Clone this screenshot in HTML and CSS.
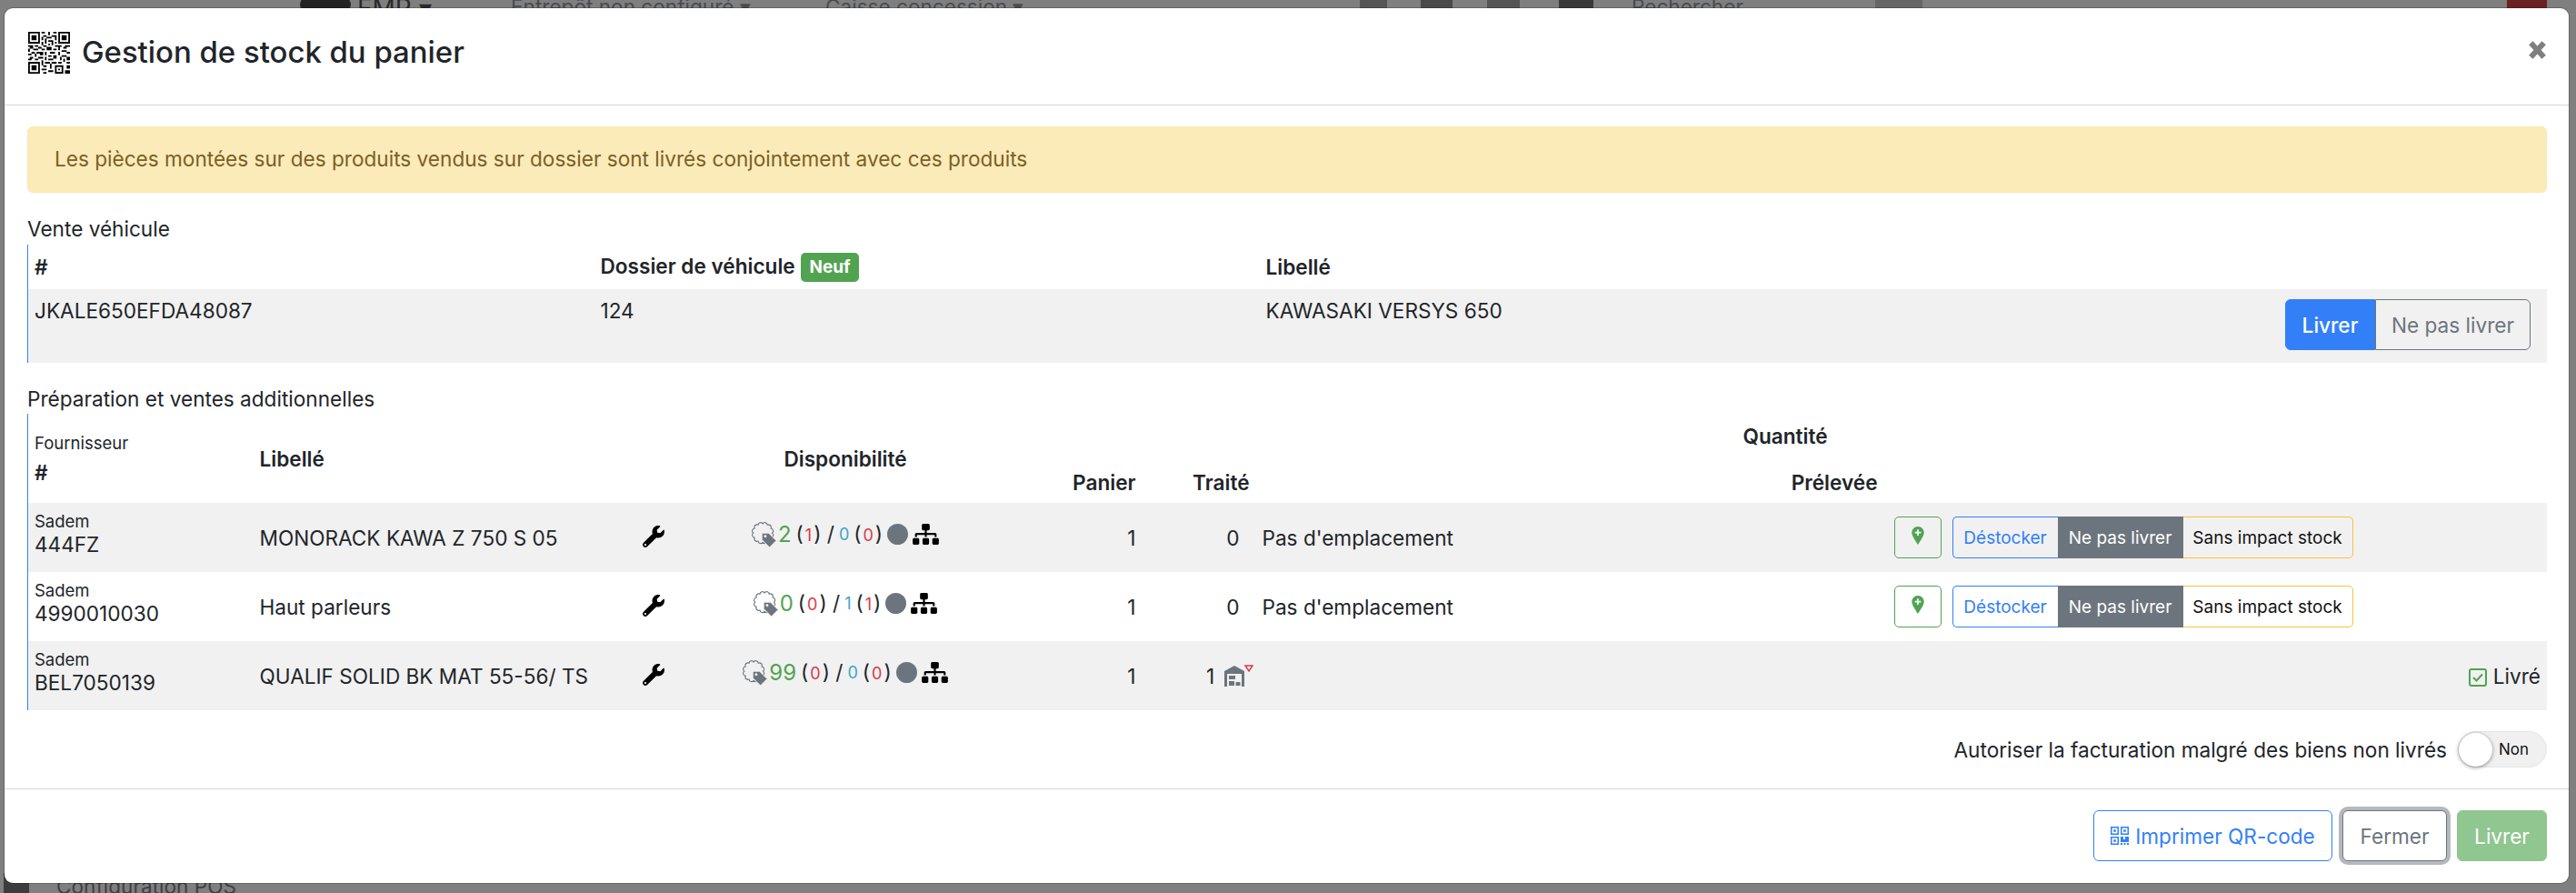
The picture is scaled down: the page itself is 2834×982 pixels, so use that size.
FILE: index.html
```html
<!DOCTYPE html>
<html lang="fr">
<head>
    <meta charset="UTF-8">
    <title>Gestion de stock du panier</title>
    <link rel="stylesheet" href="styles.css">
</head>
<body>
    <svg class="defs" width="0" height="0">
        <symbol id="i-qr" viewBox="0 0 25 25">
            <path fill-rule="evenodd" d="M0 0h7v7H0zM1 1v5h5V1zM2 2h3v3H2zM18 0h7v7h-7zM19 1v5h5V1zM20 2h3v3h-3zM0 18h7v7H0zM1 19v5h5v-5zM2 20h3v3H2z"/>
            <path d="M8 0h2v1H8zM12 0h1v2h-1zM15 0h2v1h-2zM9 2h2v1H9zM14 2h3v1h-3zM8 3h1v2H8zM11 3h3v1h-3zM16 3h1v2h-1zM10 4h1v3h-1zM12 5h3v1h-3zM8 6h1v2H8zM14 6h1v2h-1zM16 6h1v1h-1zM12 7h1v1h-1zM0 8h3v1H0zM4 8h2v1H4zM9 8h2v1H9zM16 8h4v1h-4zM22 8h3v1h-3zM1 9h2v1H1zM6 9h2v1H6zM11 9h3v2h-3zM18 9h1v2h-1zM21 9h2v1h-2zM0 10h1v2H0zM3 10h3v1H3zM8 10h2v1H8zM15 10h2v1h-2zM20 11h3v1h-3zM2 12h2v1H2zM5 12h4v1H5zM10 12h1v2h-1zM13 12h3v1h-3zM18 12h1v2h-1zM23 12h2v1h-2zM0 13h2v1H0zM4 13h1v2H4zM7 13h2v1H7zM12 14h2v1h-2zM15 14h2v2h-2zM20 14h3v1h-3zM1 15h2v1H1zM6 15h3v1H6zM10 15h1v2h-1zM19 15h1v2h-1zM23 15h2v2h-2zM0 16h2v1H0zM4 16h2v1H4zM12 16h3v1h-3zM21 16h1v2h-1zM8 17h1v3H8zM14 18h3v1h-3zM18 18h2v1h-2zM23 18h2v1h-2zM10 18h3v1h-3zM9 20h2v1H9zM13 19h1v3h-1zM16 20h5v5h-5zM23 20h2v2h-2zM8 22h3v1H8zM12 23h3v1h-3zM22 23h3v2h-3zM9 24h2v1H9z"/>
            <path fill="#fff" d="M17 21h3v3h-3z"/>
            <path d="M18 22h1v1h-1z"/>
        </symbol>
        <symbol id="i-qr-small" viewBox="0 0 20 20">
            <path fill-rule="evenodd" d="M0 0h9v9H0zM1.500 1.500v6h6v-6zM3.200 3.200h2.600v2.600H3.200zM11 0h9v9h-9zM12.500 1.500v6h6v-6zM14.200 3.200h2.600v2.600h-2.600zM0 11h9v9H0zM1.500 12.500v6h6v-6zM3.200 14.200h2.600v2.600H3.200z"/>
            <path d="M11 11h3v3h2v-3h4v6h-9zM11 18h2v2h-2zM14.500 18h2v2h-2zM18 18h2v2h-2z"/>
        </symbol>
        <symbol id="i-wrench" viewBox="0 0 512 512">
            <path d="M507.73 109.1c-2.24-9.03-13.54-12.09-20.12-5.51l-74.36 74.36-67.88-11.31-11.31-67.88 74.36-74.36c6.62-6.62 3.43-17.9-5.66-20.16-47.38-11.74-99.55.91-136.58 37.93-39.64 39.64-50.55 97.1-34.05 147.2L18.74 402.76c-24.99 24.99-24.99 65.51 0 90.5 24.99 24.99 65.51 24.99 90.5 0l213.21-213.21c50.12 16.71 107.47 5.68 147.37-34.22 37.07-37.07 49.7-89.32 37.91-136.73zM64 472c-13.25 0-24-10.75-24-24 0-13.26 10.75-24 24-24s24 10.74 24 24c0 13.25-10.75 24-24 24z"/>
        </symbol>
        <symbol id="i-sitemap" viewBox="0 0 640 512">
            <path d="M128 352H32c-17.67 0-32 14.33-32 32v96c0 17.67 14.33 32 32 32h96c17.67 0 32-14.33 32-32v-96c0-17.67-14.33-32-32-32zm-24-80h192v48h48v-48h192v48h48v-57.59c0-21.17-17.23-38.41-38.41-38.41H344v-64h40c17.67 0 32-14.33 32-32V32c0-17.67-14.33-32-32-32H256c-17.67 0-32 14.33-32 32v96c0 17.67 14.33 32 32 32h40v64H94.41C73.23 224 56 241.23 56 262.41V320h48v-48zm264 80h-96c-17.67 0-32 14.33-32 32v96c0 17.67 14.33 32 32 32h96c17.67 0 32-14.33 32-32v-96c0-17.67-14.33-32-32-32zm240 0h-96c-17.67 0-32 14.33-32 32v96c0 17.67 14.33 32 32 32h96c17.67 0 32-14.33 32-32v-96c0-17.67-14.33-32-32-32z"/>
        </symbol>
        <symbol id="i-tag" viewBox="0 0 30 30">
            <path fill="none" stroke="#6c757d" stroke-width="1.200" d="M24 13A3 3 0 0 1 22.530 18.500A3 3 0 0 1 18.500 22.530A3 3 0 0 1 13 24A3 3 0 0 1 7.500 22.530A3 3 0 0 1 3.470 18.500A3 3 0 0 1 2 13A3 3 0 0 1 3.470 7.500A3 3 0 0 1 7.500 3.470A3 3 0 0 1 13 2A3 3 0 0 1 18.500 3.470A3 3 0 0 1 22.530 7.500A3 3 0 0 1 24 13Z"/>
            <path fill="#6c757d" stroke="#f7f7f7" d="M12 13h8l9 9-8 8-9-9z"/>
            <circle cx="16" cy="17" r="1.600" fill="#f1f1f1"/>
        </symbol>
        <symbol id="i-marker" viewBox="0 0 16 24">
            <path fill="#51a351" d="M8 0C3.600 0 0 3.500 0 8c0 4.500 5 11 8 16 3-5 8-11.500 8-16 0-4.500-3.600-8-8-8z"/>
            <path fill="#fff" d="M7 4h2v3h3v2H9v3H7V9H4V7h3z"/>
        </symbol>
        <symbol id="i-check" viewBox="0 0 20 20">
            <rect x="1" y="1" width="18" height="18" rx="2" fill="none" stroke="#51a351" stroke-width="2"/>
            <path fill="none" stroke="#51a351" stroke-width="2" d="M5 10l3.500 3.500L15 6.500"/>
        </symbol>
        <symbol id="i-warehouse" viewBox="0 0 32 24">
            <path fill="#6c757d" d="M0 7L11 1l11 6v17h-3V10H3v14H0z"/>
            <path fill="#6c757d" d="M5 12h7v4H5zM5 18h6v5H5zM12.500 19h5v4h-5z"/>
            <path fill="none" stroke="#d9394b" stroke-width="1.500" d="M23 1h8l-4 6z"/>
        </symbol>
    </svg>

    <!-- page behind the modal, only the edges show -->
    <div class="backdrop">
        <span class="bd-logo"></span>
        <span class="bd-text bd-fmp">FMP ▾</span>
        <span class="bd-text bd-store">Entrepôt non configuré ▾</span>
        <span class="bd-text bd-till">Caisse concession ▾</span>
        <span class="bd-block bd-b1"></span>
        <span class="bd-block bd-b2"></span>
        <span class="bd-block bd-b3"></span>
        <span class="bd-block bd-b4"></span>
        <span class="bd-text bd-search">Rechercher</span>
        <span class="bd-block bd-b5"></span>
        <span class="bd-red"></span>
        <span class="bd-text bd-config">Configuration POS</span>
        <span class="bd-square"></span>
    </div>

    <div class="modal">
        <header class="modal-header">
            <svg class="title-qr"><use href="#i-qr"/></svg>
            <h1>Gestion de stock du panier</h1>
            <svg class="close-x" viewBox="0 0 17 20"><path d="M2 3l13 14M15 3L2 17"/></svg>
        </header>

        <div class="modal-body">
            <div class="alert">Les pièces montées sur des produits vendus sur dossier sont livrés conjointement avec ces produits</div>

            <div class="label">Vente véhicule</div>
            <table class="grid vehicle">
                <colgroup><col class="v1"><col class="v2"><col></colgroup>
                <tr>
                    <th>#</th>
                    <th>Dossier de véhicule <span class="badge">Neuf</span></th>
                    <th>Libellé</th>
                </tr>
                <tr class="odd">
                    <td>JKALE650EFDA48087</td>
                    <td>124</td>
                    <td>
                        <div class="vehicle-line">
                            <span>KAWASAKI VERSYS 650</span>
                            <div class="switch">
                                <button class="sw-on">Livrer</button>
                                <button class="sw-off">Ne pas livrer</button>
                            </div>
                        </div>
                    </td>
                </tr>
            </table>

            <div class="label second">Préparation et ventes additionnelles</div>
            <table class="grid parts">
                <colgroup>
                    <col class="c1"><col class="c2"><col class="c3"><col class="c4">
                    <col class="c5"><col class="c6"><col class="c7"><col>
                </colgroup>
                <tr class="head-top">
                    <th rowspan="2"><span class="small">Fournisseur</span><br>#</th>
                    <th rowspan="2">Libellé</th>
                    <th rowspan="2"></th>
                    <th rowspan="2" class="center">Disponibilité</th>
                    <th colspan="3" class="qty-head">Quantité</th>
                    <th rowspan="2"></th>
                </tr>
                <tr class="head-bottom">
                    <th class="right">Panier</th>
                    <th class="right">Traité</th>
                    <th class="right">Prélevée</th>
                </tr>

                <tr class="odd row">
                    <td class="supplier"><span class="small">Sadem</span><br>444FZ</td>
                    <td>MONORACK KAWA Z 750 S 05</td>
                    <td><svg class="ic-wrench"><use href="#i-wrench"/></svg></td>
                    <td class="center">
                        <div class="stock">
                            <svg class="ic-tag"><use href="#i-tag"/></svg>
                            <span class="ok">2</span>
                            <span class="paren">(<i class="bad">1</i>) /</span>
                            <i class="info">0</i>
                            <span class="paren">(<i class="bad">0</i>)</span>
                            <span class="dot"></span>
                            <svg class="ic-sitemap"><use href="#i-sitemap"/></svg>
                        </div>
                    </td>
                    <td class="right">1</td>
                    <td class="right pad-done">0</td>
                    <td class="place">Pas d'emplacement</td>
                    <td class="actions">
                        <div class="action-line">
                            <button class="btn-marker"><svg class="ic-marker"><use href="#i-marker"/></svg></button>
                            <div class="choice">
                                <button class="ch-blue">Déstocker</button>
                                <button class="ch-gray">Ne pas livrer</button>
                                <button class="ch-yellow">Sans impact stock</button>
                            </div>
                        </div>
                    </td>
                </tr>
                <tr class="row">
                    <td class="supplier"><span class="small">Sadem</span><br>4990010030</td>
                    <td>Haut parleurs</td>
                    <td><svg class="ic-wrench"><use href="#i-wrench"/></svg></td>
                    <td class="center">
                        <div class="stock">
                            <svg class="ic-tag"><use href="#i-tag"/></svg>
                            <span class="ok">0</span>
                            <span class="paren">(<i class="bad">0</i>) /</span>
                            <i class="info">1</i>
                            <span class="paren">(<i class="bad">1</i>)</span>
                            <span class="dot"></span>
                            <svg class="ic-sitemap"><use href="#i-sitemap"/></svg>
                        </div>
                    </td>
                    <td class="right">1</td>
                    <td class="right pad-done">0</td>
                    <td class="place">Pas d'emplacement</td>
                    <td class="actions">
                        <div class="action-line">
                            <button class="btn-marker"><svg class="ic-marker"><use href="#i-marker"/></svg></button>
                            <div class="choice">
                                <button class="ch-blue">Déstocker</button>
                                <button class="ch-gray">Ne pas livrer</button>
                                <button class="ch-yellow">Sans impact stock</button>
                            </div>
                        </div>
                    </td>
                </tr>
                <tr class="odd row">
                    <td class="supplier"><span class="small">Sadem</span><br>BEL7050139</td>
                    <td>QUALIF SOLID BK MAT 55-56/ TS</td>
                    <td><svg class="ic-wrench"><use href="#i-wrench"/></svg></td>
                    <td class="center">
                        <div class="stock">
                            <svg class="ic-tag"><use href="#i-tag"/></svg>
                            <span class="ok">99</span>
                            <span class="paren">(<i class="bad">0</i>) /</span>
                            <i class="info">0</i>
                            <span class="paren">(<i class="bad">0</i>)</span>
                            <span class="dot"></span>
                            <svg class="ic-sitemap"><use href="#i-sitemap"/></svg>
                        </div>
                    </td>
                    <td class="right">1</td>
                    <td class="right done-cell">1 <svg class="ic-warehouse"><use href="#i-warehouse"/></svg></td>
                    <td></td>
                    <td class="right delivered"><svg class="ic-check"><use href="#i-check"/></svg> Livré</td>
                </tr>
            </table>

            <div class="allow-line">
                <span>Autoriser la facturation malgré des biens non livrés</span>
                <span class="toggle"><span class="knob"></span><span class="toggle-text">Non</span></span>
            </div>
        </div>

        <footer class="modal-footer">
            <button class="btn btn-print"><svg class="ic-qr-small"><use href="#i-qr-small"/></svg>Imprimer QR-code</button>
            <button class="btn btn-close">Fermer</button>
            <button class="btn btn-deliver">Livrer</button>
        </footer>
    </div>
</body>
</html>
```

FILE: styles.css
```css
* {
    box-sizing: border-box;
}
html, body {
    height: 100%;
}
body {
    margin: 0;
    padding: 9px 8px 11px 5px;
    background: #7f7f7f;
    font-family: Inter, "Liberation Sans", sans-serif;
    font-size: 22.6px;
    line-height: 31px;
    color: #212529;
    overflow: hidden;
    position: relative;
}
button {
    font-family: inherit;
}
.defs {
    position: absolute;
}

/* behind the modal */
.backdrop {
    position: absolute;
    inset: 0;
}
.bd-text {
    position: absolute;
    color: #484c50;
    white-space: nowrap;
}
.bd-fmp { left: 393px; top: -6px; font-size: 28px; color: #2a2a2a; }
.bd-store { left: 562px; top: -8px; }
.bd-till { left: 908px; top: -8px; }
.bd-search { left: 1795px; top: -8px; }
.bd-config { left: 62px; top: 959px; color: #3f3f3f; }
.bd-logo {
    position: absolute;
    left: 330px;
    top: -10px;
    width: 56px;
    height: 30px;
    border-radius: 50%;
    background: #222;
}
.bd-block {
    position: absolute;
    top: 0;
    height: 10px;
    background: #555;
}
.bd-b1 { left: 1496px; width: 30px; }
.bd-b2 { left: 1563px; width: 35px; background: #4a4a4a; }
.bd-b3 { left: 1636px; width: 36px; }
.bd-b4 { left: 1715px; width: 38px; background: #3a3a3a; }
.bd-b5 { left: 2063px; width: 52px; background: #666; }
.bd-red {
    position: absolute;
    left: 2758px;
    top: 0;
    width: 44px;
    height: 10px;
    background: #6b2222;
}
.bd-square {
    position: absolute;
    left: 4px;
    top: 960px;
    width: 28px;
    height: 22px;
    background: #3c3c3c;
}

/* modal */
.modal {
    position: relative;
    height: 962px;
    background: #fff;
    border-radius: 9px;
    box-shadow: 0 0 0 1px rgba(0, 0, 0, 0.2);
    display: flex;
    flex-direction: column;
}
.modal-header {
    height: 107px;
    flex: none;
    display: flex;
    align-items: center;
    padding: 0 25px 0 26px;
    border-bottom: 1px solid #d6d8d9;
}
.title-qr {
    width: 46px;
    height: 46px;
    margin-right: 13px;
    margin-top: -8px;
}
.modal-header h1 {
    margin: 0;
    font-size: 32.9px;
    line-height: 40px;
    font-weight: 500;
    flex: 1;
    position: relative;
    top: -5px;
}
.close-x {
    width: 19px;
    height: 22px;
    position: relative;
    top: -7px;
}
.close-x path {
    fill: none;
    stroke: #7f7f7f;
    stroke-width: 5.5px;
}
.modal-body {
    flex: 1;
    padding: 23px 24px 0 25px;
}
.alert {
    height: 73px;
    padding: 19px 29px;
    background: #fbebb9;
    border: 1px solid #fbe8af;
    border-radius: 6px;
    color: #7c6025;
}
.label {
    margin-top: 24px;
    height: 33px;
    line-height: 32px;
}
.label.second {
    margin-top: 24px;
    height: 32px;
}
.grid {
    width: 100%;
    table-layout: fixed;
    border-collapse: collapse;
    border-left: 1px solid #337ff8;
}
.grid th {
    font-weight: 600;
    text-align: left;
    padding: 0 8px 0 7px;
    vertical-align: middle;
}
.grid td {
    padding: 0 8px 0 7px;
}
.odd td {
    background: #f1f1f1;
}
.small {
    font-size: 18.5px;
    font-weight: 400;
    line-height: 25px;
}
.grid .center {
    text-align: center;
}
.grid .right {
    text-align: right;
}

/* vehicle table */
.v1 { width: 623px; }
.v2 { width: 732px; }
.vehicle th {
    height: 49px;
}
.vehicle td {
    height: 81px;
    vertical-align: top;
    padding-top: 8px;
}
.vehicle-line {
    display: flex;
    justify-content: space-between;
    align-items: flex-start;
    padding-right: 10px;
}
.badge {
    display: inline-block;
    height: 32px;
    padding: 0 9px;
    margin-left: 1px;
    background: #51a351;
    color: #fff;
    border-radius: 5px;
    font-size: 19px;
    font-weight: 700;
    line-height: 32px;
    vertical-align: 1px;
}
.switch {
    display: flex;
    margin-top: 3px;
}
.switch button {
    height: 56px;
    font-size: 22.6px;
    padding: 0;
}
.sw-on {
    width: 99px;
    background: #337ff8;
    color: #fff;
    border: 1px solid #337ff8;
    border-radius: 6px 0 0 6px;
    font-weight: 500;
}
.sw-off {
    width: 171px;
    background: transparent;
    color: #6c757d;
    border: 1px solid #6c757d;
    border-radius: 0 6px 6px 0;
}

/* parts table */
.c1 { width: 248px; }
.c2 { width: 412px; }
.c3 { width: 55px; }
.c4 { width: 370px; }
.c5 { width: 142px; }
.c6 { width: 125px; }
.c7 { width: 691px; }
.head-top th, .head-bottom th {
    height: 49px;
}
.head-top .small {
    display: inline-block;
    position: relative;
    top: -3px;
}
.grid .qty-head {
    text-align: right;
    padding-right: 63px;
    padding-bottom: 1px;
}
.head-bottom th {
    padding-top: 3px;
}
.row td {
    height: 76px;
    white-space: nowrap;
}
.row .supplier {
    line-height: 26px;
    padding-bottom: 12px;
}
.pad-done {
    padding-right: 19px !important;
}
.done-cell {
    padding-right: 4px !important;
}
.place {
    padding-left: 6px !important;
}
.ic-wrench {
    width: 24px;
    height: 24px;
    display: block;
    margin: -3px 0 0 9px;
}
.stock {
    display: inline-flex;
    align-items: center;
    gap: 5px;
    position: relative;
    top: -1px;
}
.stock i {
    font-style: normal;
    font-size: 18px;
}
.ok {
    color: #51a351;
    font-size: 24px;
    margin-left: -4px;
}
.paren {
    white-space: pre;
}
.bad {
    color: #d9394b;
    margin: 0 2px;
}
.info {
    color: #3ea5c6;
}
.ic-tag {
    width: 28px;
    height: 28px;
}
.dot {
    width: 23px;
    height: 23px;
    border-radius: 50%;
    background: #6c757d;
    margin-top: -1px;
}
.ic-sitemap {
    width: 29px;
    height: 23px;
}
.ic-warehouse {
    width: 32px;
    height: 24px;
    vertical-align: -3px;
    margin-left: 4px;
}
.actions {
    padding-left: 10px !important;
}
.action-line {
    display: flex;
    gap: 12px;
}
.btn-marker {
    width: 52px;
    height: 46px;
    padding: 0;
    background: transparent;
    border: 1px solid #51a351;
    border-radius: 5px;
    display: flex;
    align-items: center;
    justify-content: center;
}
.ic-marker {
    width: 14px;
    height: 20px;
    margin-top: -5px;
}
.choice {
    display: flex;
}
.choice button {
    height: 46px;
    padding: 0;
    font-size: 19px;
    background: transparent;
}
.ch-blue {
    width: 116px;
    color: #337ff8;
    border: 1px solid #337ff8;
    border-right: 0;
    border-radius: 5px 0 0 5px;
}
.choice .ch-gray {
    width: 138px;
    color: #fff;
    background: #6c757d;
    border: 1px solid #6c757d;
}
.ch-yellow {
    width: 187px;
    color: #111;
    border: 1px solid #fbc13e;
    border-left: 0;
    border-radius: 0 5px 5px 0;
}
.delivered {
    padding-right: 7px !important;
}
.ic-check {
    width: 20px;
    height: 20px;
    vertical-align: -3px;
}

/* toggle line */
.allow-line {
    display: flex;
    justify-content: flex-end;
    align-items: center;
    gap: 12px;
    height: 40px;
    margin-top: 23px;
}
.toggle {
    width: 98px;
    height: 40px;
    background: #f0f0f0;
    border: 1px solid #e6e6e6;
    border-radius: 20px;
    position: relative;
    display: flex;
    align-items: center;
    justify-content: flex-end;
    padding-right: 19px;
}
.knob {
    position: absolute;
    left: 0;
    top: 1px;
    width: 37px;
    height: 37px;
    border-radius: 50%;
    background: #fff;
    box-shadow: 0 1px 4px rgba(0, 0, 0, 0.45);
}
.toggle-text {
    font-size: 17px;
    color: #111;
}

/* footer */
.modal-footer {
    flex: none;
    height: 104px;
    border-top: 1px solid #d6d8d9;
    padding: 23px 24px 0 0;
    display: flex;
    justify-content: flex-end;
    gap: 11px;
}
.btn {
    height: 56px;
    padding: 0;
    font-size: 22.6px;
    border-radius: 6px;
    background: #fff;
    display: flex;
    align-items: center;
    justify-content: center;
}
.btn-print {
    width: 263px;
    color: #337ff8;
    border: 1px solid #337ff8;
    gap: 7px;
}
.ic-qr-small {
    width: 20px;
    height: 20px;
    fill: #337ff8;
}
.btn-close {
    width: 115px;
    color: #6c757d;
    border: 1px solid #6c757d;
    box-shadow: 0 0 0 4px #b5b9bd;
}
.btn-deliver {
    width: 99px;
    color: #fff;
    background: #90c68f;
    border: 1px solid #90c68f;
}
```
